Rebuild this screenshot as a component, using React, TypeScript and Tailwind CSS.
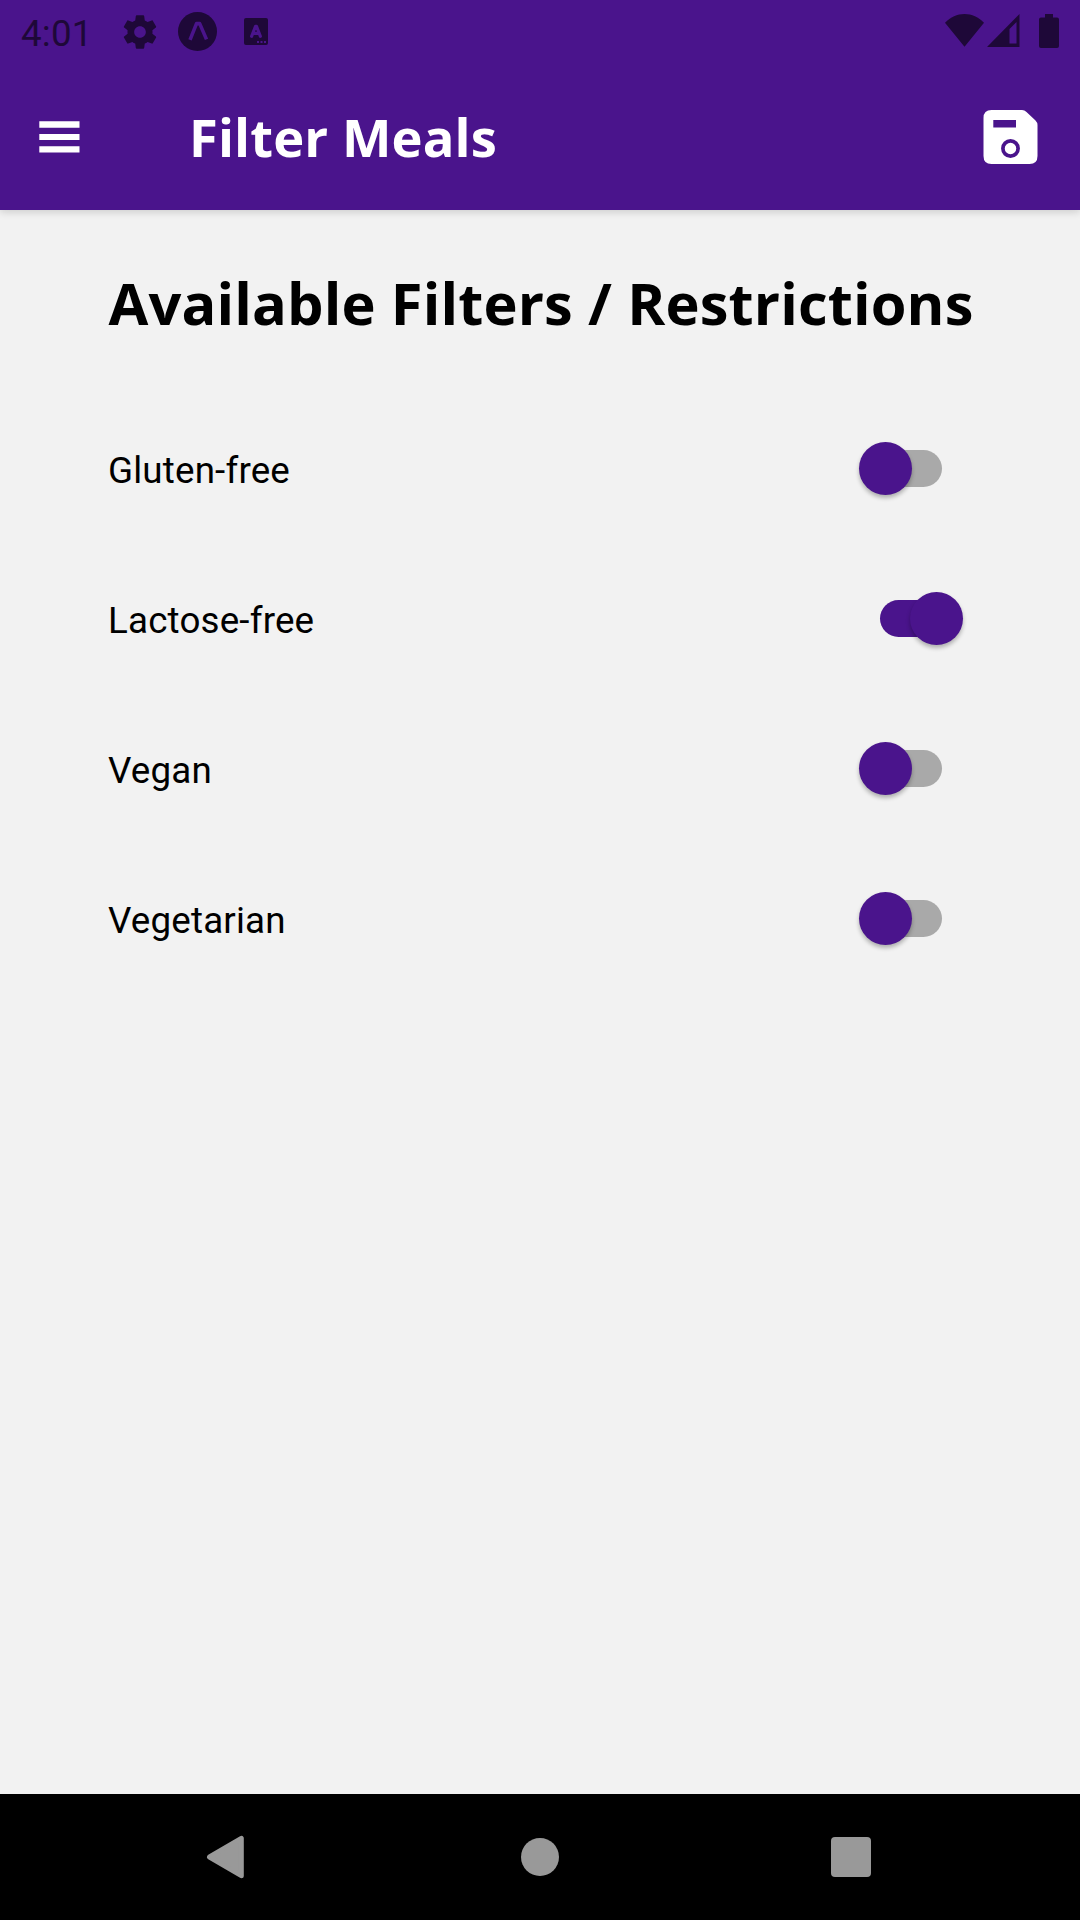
import React from "react";

const INK = "#1e0838";

function StatusBar() {
  return (
    <div className="flex h-[63px] items-start justify-between">
      <div className="flex items-start">
        <span className="ml-[21px] mt-[12px] w-[68px] whitespace-nowrap font-['Roboto',sans-serif] text-[36.75px] leading-[44px] tracking-[0.2px] text-[#1e0838]">
          4:01
        </span>
        <svg className="ml-[31px] mt-[11.5px] h-[40px] w-[40px]" viewBox="0 0 24 24" fill={INK}>
          <path d="M19.43 12.98c.04-.32.07-.64.07-.98s-.03-.66-.07-.98l2.11-1.65c.19-.15.24-.42.12-.64l-2-3.46c-.12-.22-.39-.3-.61-.22l-2.49 1c-.52-.4-1.08-.73-1.69-.98l-.38-2.65C14.46 2.18 14.25 2 14 2h-4c-.25 0-.46.18-.49.42l-.38 2.65c-.61.25-1.17.59-1.69.98l-2.49-1c-.23-.09-.49 0-.61.22l-2 3.46c-.13.22-.07.49.12.64l2.11 1.65c-.04.32-.07.65-.07.98s.03.66.07.98l-2.11 1.65c-.19.15-.24.42-.12.64l2 3.46c.12.22.39.3.61.22l2.49-1c.52.4 1.08.73 1.69.98l.38 2.65c.03.24.24.42.49.42h4c.25 0 .46-.18.49-.42l.38-2.65c.61-.25 1.17-.59 1.69-.98l2.49 1c.23.09.49 0 .61-.22l2-3.46c.12-.22.07-.49-.12-.64l-2.11-1.65zM12 15.5c-1.93 0-3.5-1.57-3.5-3.5s1.57-3.5 3.5-3.5 3.5 1.57 3.5 3.5-1.57 3.5-3.5 3.5z" />
        </svg>
        <svg className="ml-[18px] mt-[12px] h-[39px] w-[39px]" viewBox="0 0 39 39">
          <circle cx="19.5" cy="19.5" r="19.5" fill={INK} />
          <path
            d="M12 27.8L18.5 11.6H21.7L28.5 27.4"
            fill="none"
            stroke="#4a148c"
            strokeWidth="3.6"
            strokeLinejoin="round"
          />
        </svg>
        <svg className="ml-[27px] mt-[18px] h-[27px] w-[24px]" viewBox="0 0 24 27">
          <rect width="24" height="27" rx="2" fill={INK} />
          <path
            d="M7.6 18.4L11.5 8.3H12.5L16.4 18.4M9 15.4H15"
            fill="none"
            stroke="#4a148c"
            strokeWidth="3.1"
            strokeLinecap="round"
            strokeLinejoin="round"
          />
          <path d="M13 23h2v2h-2zM16.5 23h2v2h-2zM20 23h2v2h-2z" fill="#4a148c" />
        </svg>
      </div>
      <div className="flex items-start pr-[21px] pt-[14px]">
        <svg className="h-[33px] w-[39px]" viewBox="0 0 39 33" fill={INK}>
          <path d="M19.5 32.7L0 8.8C5.5 3 12.2 0 19.5 0S33.5 3 39 8.8z" />
        </svg>
        <svg className="ml-[3px] h-[33px] w-[33px]" viewBox="0 0 33 33" fill={INK}>
          <path fillRule="evenodd" d="M32.5 0V33H0zM29.5 8L22.5 15V29.5H29.5z" />
        </svg>
        <svg className="ml-[19px] h-[34px] w-[20px]" viewBox="0 0 20 34" fill={INK}>
          <path d="M6 0H14V3.5H18Q20 3.5 20 5.5V32Q20 34 18 34H2Q0 34 0 32V5.5Q0 3.5 2 3.5H6z" />
        </svg>
      </div>
    </div>
  );
}

function AppBar() {
  return (
    <div className="flex h-[147px] items-center">
      <button aria-label="Open menu" className="ml-[39px] h-[33px] w-[41px]">
        <svg className="h-[33px] w-[41px]" viewBox="0 0 41 33" fill="#fff">
          <path d="M.3 1.3H40.5V7.8H.3zM.3 14H40.5V20H.3zM.3 26.2H40.5V32.5H.3z" />
        </svg>
      </button>
      <h1 className="ml-[109px] whitespace-nowrap font-['Open_Sans',sans-serif] text-[52.5px] font-bold leading-[72px] tracking-[0.12px] text-white">
        Filter Meals
      </h1>
      <button aria-label="Save filters" className="ml-auto mr-[42px] h-[54px] w-[55px]">
        <svg className="h-[54px] w-[55px]" viewBox="0 0 55 54">
          <path
            fillRule="evenodd"
            fill="#fff"
            d="M8.5 0H39Q41.5 0 43.5 2L52.5 10.5Q54.5 12.5 54.5 15V46Q54.5 54 46.5 54H8.5Q.5 54 .5 46V8Q.5 0 8.5 0zM10.3 10V17.5H33V10z"
          />
          <circle cx="27.5" cy="38.5" r="7.6" fill="none" stroke="#4a148c" strokeWidth="3.7" />
        </svg>
      </button>
    </div>
  );
}

function Switch({ on }: { on: boolean }) {
  return (
    <button
      role="switch"
      aria-checked={on}
      className={
        "relative mb-[1px] mr-[30px] h-[37px] w-[62px] rounded-full " +
        (on ? "bg-[#4a148c]" : "bg-[#a9a9a9]")
      }
    >
      <span
        className={
          "absolute top-[-8px] h-[52.5px] w-[52.5px] rounded-full bg-[#4a148c] shadow-[0_3px_4px_rgba(0,0,0,0.28)] " +
          (on ? "left-[30.3px]" : "left-[-20.8px]")
        }
      />
    </button>
  );
}

const filters = [
  { label: "Gluten-free", on: false },
  { label: "Lactose-free", on: true },
  { label: "Vegan", on: false },
  { label: "Vegetarian", on: false },
];

export default function App() {
  return (
    <div className="flex h-[1920px] w-[1080px] flex-col overflow-hidden bg-[#f2f2f2]">
      <header className="h-[210px] shrink-0 bg-[#4a148c] shadow-[0_2px_8px_rgba(0,0,0,0.16)]">
        <StatusBar />
        <AppBar />
      </header>
      <main className="flex flex-1 flex-col">
        <h2 className="mt-[54px] whitespace-nowrap pl-[2px] text-center font-['Open_Sans',sans-serif] text-[57.75px] font-bold leading-[78px] tracking-[0.14px] text-black">
          Available Filters / Restrictions
        </h2>
        <div className="mx-[108px] mt-[52px]">
          {filters.map((f) => (
            <div key={f.label} className="flex h-[150px] items-center justify-between">
              <span className="pt-[3px] font-['Roboto',sans-serif] text-[36.75px] leading-[44px] tracking-[0.18px] text-black">
                {f.label}
              </span>
              <Switch on={f.on} />
            </div>
          ))}
        </div>
      </main>
      <nav className="flex h-[126px] shrink-0 items-center bg-black">
        <svg className="ml-[206px] h-[44px] w-[38px]" viewBox="0 0 38 44">
          <path
            d="M3.5 22L35.3 3.3V40.7z"
            fill="#999"
            stroke="#999"
            strokeWidth="5"
            strokeLinejoin="round"
          />
        </svg>
        <div className="ml-[277px] h-[38px] w-[38px] rounded-full bg-[#999]" />
        <div className="ml-[272px] h-[40px] w-[40px] rounded-[4px] bg-[#999]" />
      </nav>
    </div>
  );
}
